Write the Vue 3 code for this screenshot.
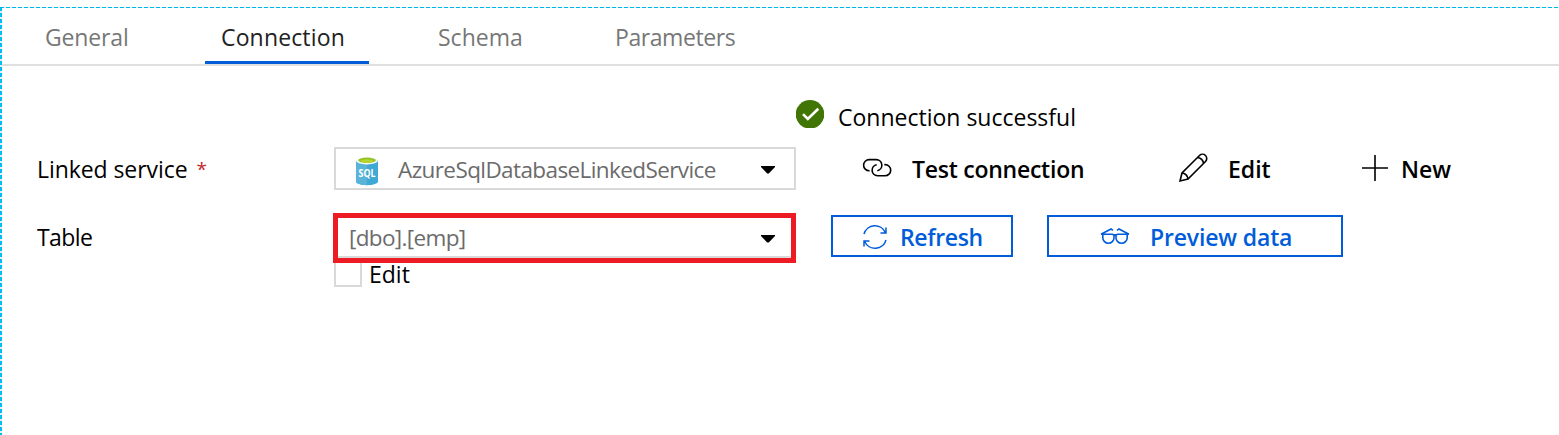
<script setup>
const tabs = [
  { label: 'General', key: 'general' },
  { label: 'Connection', key: 'connection', active: true },
  { label: 'Schema', key: 'schema' },
  { label: 'Parameters', key: 'parameters' },
]
</script>

<template>
  <main class="panel">
    <nav class="tabs">
      <a v-for="t in tabs" :key="t.key" :class="['tab', t.key, { active: t.active }]"><span>{{ t.label }}</span></a>
    </nav>

    <div class="status">
      <svg class="ok" width="28" height="28" viewBox="0 0 28 28">
        <circle cx="14" cy="14.3" r="14.3" fill="#417505" />
        <path d="M7 14.200l4.800 4.800L22.300 8.700" fill="none" stroke="#fff" stroke-width="2.6" />
      </svg>
      <span class="status-text">Connection successful</span>
    </div>

    <div class="row service-row">
      <label class="label"><span class="linked">Linked service</span><span class="star">*</span></label>
      <div class="select service">
        <svg class="db" width="24" height="30" viewBox="0 0 24 30">
          <path d="M1 4v21.500c0 2 4.700 3.700 11 3.700s11-1.700 11-3.700V4z" fill="#3fa9d5" />
          <path d="M1 4v21.500c0 2 4.700 3.700 11 3.700V4z" fill="#5ab4d9" />
          <ellipse cx="12" cy="4.500" rx="11" ry="3.900" fill="#fff" />
          <ellipse cx="12" cy="4.300" rx="8.900" ry="2.700" fill="#8fc31f" />
          <ellipse cx="12" cy="5" rx="6.500" ry="1.700" fill="#b8d432" />
          <text x="12" y="20.800" text-anchor="middle" textLength="17" lengthAdjust="spacingAndGlyphs">SQL</text>
        </svg>
        <span class="service-name">AzureSqlDatabaseLinkedService</span>
        <svg class="caret" width="14" height="8" viewBox="0 0 14 8"><path d="M0 0h14v1L7.800 7.600h-1.600L0 1z" /></svg>
      </div>
      <div class="action test">
        <svg width="30" height="20" viewBox="0 0 30 20">
          <path d="M7.600 12.800H7.200A5.600 5.600 0 0 1 7.200 1.600h7.100a5.600 5.600 0 0 1 1 11.100M22.300 6.600h.8a5.600 5.600 0 0 1 0 11.200h-7.600a5.600 5.600 0 0 1-.8-11.100" />
        </svg>
        <span>Test connection</span>
      </div>
      <div class="action edit">
        <svg width="30" height="30" viewBox="0 0 30 30">
          <path d="M2 28l2-8L21.500 2.500a4.200 4.200 0 0 1 6 6L10 26zM4 20c3 0 6 3 6 6M19.500 4.500c3 0 6 3 6 6" />
        </svg>
        <span>Edit</span>
      </div>
      <div class="action new">
        <svg width="28" height="28" viewBox="0 0 28 28"><path d="M14 1v26M1 14h26" /></svg>
        <span>New</span>
      </div>
    </div>

    <div class="row table-row">
      <label class="label"><span class="table-label">Table</span></label>
      <div class="highlight">
        <div class="table-select">
          <span class="table-name">[dbo].[emp]</span>
          <svg class="caret" width="14" height="8" viewBox="0 0 14 8"><path d="M0 0h14v1L7.800 7.600h-1.600L0 1z" /></svg>
        </div>
      </div>
      <button class="btn refresh">
        <svg width="26" height="26" viewBox="0 0 26 26">
          <path d="M2 10A11.300 11.300 0 0 1 23.300 8.500M24 3.500v5.500h-5.500M24 16A11.300 11.300 0 0 1 2.700 17.500M2 22.500v-5.500h5.500" />
        </svg>
        <span>Refresh</span>
      </button>
      <button class="btn preview">
        <svg width="30" height="18" viewBox="0 0 30 18">
          <path d="M1 7.200h11.200c2.200 1 3.400 1 5.600 0H29M2.800 7.500v3.200a5.600 5.600 0 0 0 11.200 0V7.800M16 7.800v2.900a5.600 5.600 0 0 0 11.200 0V7.500M1 7.200L11 2l2 1.300M29 7.200L19 2l-2 1.300" />
        </svg>
        <span>Preview data</span>
      </button>
    </div>

    <div class="manual">
      <i class="checkbox"></i>
      <span class="manual-text">Edit</span>
    </div>
  </main>
</template>

<style>
body { margin: 0; background: #fff; }
</style>

<style scoped>
.panel {
  box-sizing: border-box;
  width: 1559px;
  height: 435px;
  padding: 8px 0 0 2px;
  overflow: hidden;
  font: 23px/32px "Open Sans", "Noto Sans", sans-serif;
  color: #000;
  white-space: nowrap;
  background:
    repeating-linear-gradient(to right, #00b4e6 0 4px, #d5f3fc 4px 6px) 0 7px / 100% 1px no-repeat,
    repeating-linear-gradient(to bottom, #00bcf2 0 4px, #d5f4fd 4px 6px) 0 7px / 2px 100% no-repeat;
}
.tabs {
  display: flex;
  height: 56px;
  border-bottom: 2px solid #e0e0e0;
  padding-left: 27px;
}
.tab {
  box-sizing: border-box;
  height: 56px;
  padding: 13px 16px 0;
  color: #777;
  border-bottom: 3px solid transparent;
}
.general { width: 116px; margin-right: 60px; letter-spacing: -0.15px; }
.connection { width: 164px; margin-right: 53px; letter-spacing: 0.15px; }
.schema { width: 116px; margin-right: 61px; }
.parameters { width: 152px; letter-spacing: -0.42px; }
.active { color: #222; border-color: #015cda; }
.status { display: flex; margin: 34px 0 0 794px; height: 36px; }
.status-text { margin: 1px 0 0 14px; }
.row { display: flex; }
.service-row { margin-top: 11px; height: 43px; align-items: center; }
.label { width: 297px; padding-left: 35px; box-sizing: border-box; display: flex; }
.service-row .label { width: 332px; }
.linked { letter-spacing: -0.07px; }
.star { color: #c4262e; margin-left: 9px; font-size: 19px; }
.table-label { letter-spacing: -0.6px; }
.select {
  box-sizing: border-box;
  width: 462px;
  height: 43px;
  border: 2px solid #d9d9d9;
  display: flex;
  align-items: center;
}
.db { margin: 4px 0 0 19px; }
.db text { font: bold 11px "Open Sans", sans-serif; fill: #fff; }
.service-name { margin: 2px 0 0 19px; width: 318px; color: #6b6b6b; font-size: 22.5px; letter-spacing: -0.6px; }
.caret { margin: 2px 0 0 45px; }
.action { display: flex; align-items: center; font-weight: 600; }
.action svg { fill: none; stroke: #000; stroke-width: 1.6; }
.test { margin-left: 65px; width: 316px; }
.test svg { margin: -1px 0 0 1px; }
.test span { margin-left: 20px; letter-spacing: -0.25px; }
.edit { width: 183px; }
.edit svg { margin: -2px 0 0 1px; }
.edit span { margin-left: 20px; }
.new svg { margin: -1px 0 0 1px; }
.new span { margin-left: 12px; }
.table-row { margin-top: 23px; height: 50px; }
.table-row .label { width: 331px; padding-top: 8px; }
.highlight {
  box-sizing: border-box;
  width: 463px;
  height: 50px;
  border: 5px solid #ed1c24;
}
.table-select {
  height: 38px;
  border-bottom: 2px solid #d9d9d9;
  display: flex;
  align-items: center;
}
.table-name { margin: 2px 0 0 11px; width: 117px; color: #6b6b6b; font-size: 22.5px; letter-spacing: -0.65px; }
.table-select .caret { margin-left: 295px; margin-top: 3px; }
.btn {
  box-sizing: border-box;
  height: 42px;
  margin: 2px 0 0 35px;
  padding: 2px 0 0;
  border: 2px solid #015cda;
  background: #fff;
  color: #015cda;
  display: flex;
  align-items: center;
  font: inherit;
  font-weight: 600;
}
.btn svg { fill: none; stroke: #015cda; stroke-width: 1.5; }
.refresh { width: 182px; }
.refresh svg { margin-left: 29px; }
.refresh span { margin-left: 12px; letter-spacing: -0.35px; }
.preview { width: 296px; margin-left: 34px; }
.preview svg { margin-left: 51px; margin-top: -3px; stroke-width: 1.6; }
.preview span { margin-left: 20px; letter-spacing: -0.15px; }
.manual { display: flex; margin-left: 332px; height: 24px; }
.checkbox { box-sizing: border-box; width: 28px; height: 24px; border: 2px solid #d9d9d9; border-top: 0; }
.manual-text { margin: -5px 0 0 7px; }
</style>
